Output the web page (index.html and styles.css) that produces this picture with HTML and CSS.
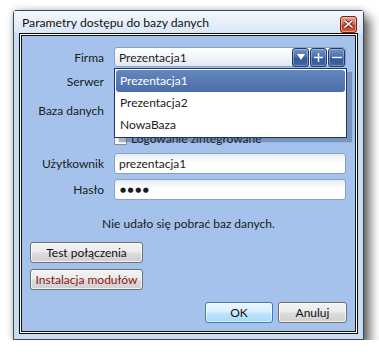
FILE: index.html
```html
<!DOCTYPE html>
<html lang="pl">
<head>
    <meta charset="UTF-8">
    <meta name="viewport" content="width=device-width, initial-scale=1.0">
    <title>Parametry dostępu do bazy danych</title>
    <link rel="stylesheet" href="styles.css">
</head>
<body>
    <div class="window">
        <div class="titlebar">
            <span class="title">Parametry dostępu do bazy danych</span>
            <span class="close-btn">
                <svg width="9" height="8" viewBox="0 0 9 8">
                    <path d="M1 1 L8 7 M8 1 L1 7" stroke="#5a1a10" stroke-width="3.2" stroke-linecap="square"/>
                    <path d="M1 1 L8 7 M8 1 L1 7" stroke="#fff" stroke-width="1.6" stroke-linecap="square"/>
                </svg>
            </span>
        </div>

        <div class="client">
            <div class="row row-firma">
                <span class="label">Firma</span>
                <div class="combo">
                    <span class="combo-text">Prezentacja1</span>
                    <span class="combo-btn">
                        <svg width="8" height="6" viewBox="0 0 8 6"><polygon points="0,0 8,0 4,6" fill="#fff"/></svg>
                    </span>
                    <span class="combo-btn">
                        <svg width="9" height="9" viewBox="0 0 9 9"><path d="M4.5 0 V9 M0 4.5 H9" stroke="#fff" stroke-width="1.4"/></svg>
                    </span>
                    <span class="combo-btn">
                        <svg width="10" height="9" viewBox="0 0 10 9"><path d="M0 4.5 H10" stroke="#fff" stroke-width="1.4"/></svg>
                    </span>

                    <ul class="dropdown">
                        <li class="item selected">Prezentacja1</li>
                        <li class="item">Prezentacja2</li>
                        <li class="item">NowaBaza</li>
                    </ul>
                </div>
            </div>

            <div class="row row-serwer">
                <span class="label">Serwer</span>
                <div class="input"></div>
            </div>

            <div class="row row-baza">
                <span class="label">Baza danych</span>
                <div class="input"></div>
            </div>

            <div class="row row-check">
                <span class="label"></span>
                <span class="checkbox"></span>
                <span class="check-text">Logowanie zintegrowane</span>
            </div>

            <div class="row row-user">
                <span class="label">Użytkownik</span>
                <div class="input">prezentacja1</div>
            </div>

            <div class="row row-pass">
                <span class="label">Hasło</span>
                <div class="input"><span class="dots">●●●●</span></div>
            </div>

            <p class="message">Nie udało się pobrać baz danych.</p>

            <button class="btn btn-side btn-test">Test połączenia</button>
            <button class="btn btn-side btn-install">Instalacja modułów</button>

            <div class="footer">
                <button class="btn btn-ok">OK</button>
                <button class="btn btn-cancel">Anuluj</button>
            </div>
        </div>
    </div>
</body>
</html>
```

FILE: styles.css
```css
* {
    margin: 0;
    padding: 0;
    box-sizing: border-box;
}

body {
    font-family: Lato, "Open Sans", sans-serif;
    font-size: 12px;
    color: #1b1b1b;
    background: #fff;
}

.window {
    margin: 10px 0 0 13px;
    width: 351px;
    height: 330px;
    border: 1px solid #3d4652;
    border-radius: 3px 3px 0 0;
    background: #cadcf2;
    display: flex;
    flex-direction: column;
    box-shadow: 6px 7px 11px rgba(0, 0, 0, 0.6), 0 0 7px rgba(0, 0, 0, 0.22);
}

/* title bar */
.titlebar {
    height: 22px;
    display: flex;
    align-items: center;
    padding: 0 6px 0 8px;
    background: linear-gradient(#f4f8fd, #dae7f6);
}

.title {
    flex: 1;
    font-size: 12.2px;
    color: #111;
}

.close-btn {
    width: 17px;
    height: 17px;
    margin-top: 4px;
    border: 1px solid #6e2416;
    border-radius: 3px;
    background: linear-gradient(#eba38f, #d7674e 45%, #c2391f 55%, #d25a3a);
    box-shadow: inset 0 0 0 1px rgba(255, 220, 210, 0.5);
    display: flex;
    align-items: center;
    justify-content: center;
}

/* client area */
.client {
    flex: 1;
    margin: 0 5px 5px 5px;
    border: 1px solid #0b0b0b;
    padding: 2px 10px 0 2px;
    background: #a4c2eb;
    box-shadow: inset 0 0 0 1px #fff, inset 0 0 0 2px #111;
}

.row {
    display: flex;
    align-items: center;
}

.label {
    width: 82px;
    margin-right: 10px;
    text-align: right;
}

.row-firma {
    height: 20px;
    margin-top: 11px;
    position: relative;
    z-index: 2;
}

.row-serwer {
    height: 20px;
    margin-top: 4px;
}

.row-baza {
    height: 20px;
    margin-top: 9px;
}

.row-check {
    height: 13px;
    margin-top: 12px;
}

.row-user {
    height: 21px;
    margin-top: 8px;
}

.row-pass {
    height: 21px;
    margin-top: 5px;
}

.input {
    width: 232px;
    height: 100%;
    border: 1px solid #8aa1c4;
    border-radius: 3px;
    background: linear-gradient(#e6ebf2, #fff 45%);
    padding-left: 4px;
    display: flex;
    align-items: center;
}

.dots {
    font-family: "DejaVu Sans", sans-serif;
    font-size: 7px;
    letter-spacing: 1.5px;
    margin-left: 1px;
}

/* combobox with its buttons */
.combo {
    width: 232px;
    height: 100%;
    position: relative;
    border: 1px solid #8aa1c4;
    border-radius: 3px;
    background: linear-gradient(#fff, #f3f5f9 50%, #e2e8f1);
    padding: 0 0 0 4px;
    display: flex;
    align-items: center;
    gap: 1px;
}

.combo-text {
    flex: 1;
}

.combo-btn {
    width: 17px;
    height: 19px;
    border: 1px solid #1f3c6f;
    border-radius: 3px;
    background: linear-gradient(#7094cb, #4a6eab 48%, #33579a 52%, #3f66a7);
    box-shadow: inset 0 0 0 1px rgba(255, 255, 255, 0.3);
    display: flex;
    align-items: center;
    justify-content: center;
}

.dropdown {
    list-style: none;
    position: absolute;
    left: -1px;
    top: 20px;
    width: 233px;
    border: 1px solid #1b3566;
    background: #fff;
    padding: 1px;
    box-shadow: 5px 4px 1px rgba(40, 60, 100, 0.35);
}

.item {
    height: 22px;
    line-height: 22px;
    padding-left: 4px;
}

.item.selected {
    color: #fff;
    border-radius: 3px;
    background: linear-gradient(#6286bd, #4b6ea9);
}

/* checkbox */
.checkbox {
    width: 13px;
    height: 13px;
    border: 1px solid #8e8f8f;
    background: linear-gradient(#dcdcdc, #fbfbfb);
    margin-right: 4px;
}

.message {
    margin-top: 16px;
    height: 16px;
    line-height: 16px;
    text-align: center;
    padding-left: 8px;
}

/* buttons */
.btn {
    display: block;
    font: inherit;
    color: #111;
    height: 21px;
    border: 1px solid #707070;
    border-radius: 3px;
    background: linear-gradient(#f3f3f3, #ebebeb 48%, #dddddd 52%, #cfcfcf);
    box-shadow: inset 0 0 0 1px rgba(255, 255, 255, 0.7);
}

.btn-side {
    width: 113px;
    margin-left: 8px;
}

.btn-test {
    margin-top: 10px;
}

.btn-install {
    margin-top: 6px;
    color: #8b1414;
}

.footer {
    display: flex;
    justify-content: flex-end;
    gap: 5px;
    margin-top: 12px;
}

.btn-ok {
    width: 68px;
    border-color: #3c7fb1;
    background: linear-gradient(#eaf6fd, #d9f0fc 48%, #bee6fd 52%, #a7d9f5);
    box-shadow: inset 0 0 0 1px rgba(255, 255, 255, 0.6);
}

.btn-cancel {
    width: 69px;
}
```
